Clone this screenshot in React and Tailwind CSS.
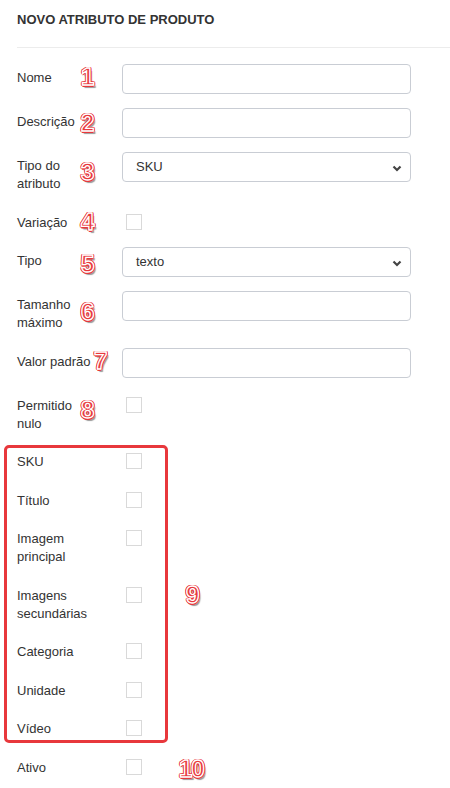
import React from "react";

const Num = ({ n, className = "" }) => (
  <span
    className={`absolute leading-none text-[24px] font-bold tracking-[-1px] text-[#e8383c] [-webkit-text-stroke:1.3px_#ffffff] [text-shadow:1.5px_0_0_#e8383c,-1.5px_0_0_#e8383c,0_1.5px_0_#e8383c,0_-1.5px_0_#e8383c,1.2px_1.2px_0_#e8383c,-1.2px_-1.2px_0_#e8383c,1.2px_-1.2px_0_#e8383c,-1.2px_1.2px_0_#e8383c,2px_2.5px_1px_#9a9a9a] pointer-events-none ${className}`}
  >
    {n}
  </span>
);

const Label = ({ children }) => (
  <div className="w-[105px] shrink-0">
    <div className="w-[78px] pt-[5px] pb-[1.5px] leading-[18px] text-[13px] text-[#333]">
      {children}
    </div>
  </div>
);

const TextField = () => (
  <input
    type="text"
    className="w-[289px] h-[30px] border border-[#c9cdd4] rounded-[4px] bg-white px-3 text-[13px] outline-none"
  />
);

const SelectField = ({ value }) => (
  <div className="relative w-[289px] h-[30px] border border-[#c9cdd4] rounded-[4px] bg-white flex items-center pl-[13px] text-[13px] text-[#333]">
    {value}
    <svg
      className="absolute right-[8px] top-[12px]"
      width="10"
      height="7"
      viewBox="0 0 10 7"
      fill="none"
    >
      <path d="M1.5 1.5l3.5 3.5 3.5-3.5" stroke="#444" strokeWidth="2.2" />
    </svg>
  </div>
);

const Check = () => (
  <div className="ml-[4px] mt-[5px] w-4 h-4 border border-[#d9d9d9] bg-white" />
);

const Row = ({ label, children, num, numClass }) => (
  <div className="relative flex items-start">
    <Label>{label}</Label>
    {children}
    {num && <Num n={num} className={numClass} />}
  </div>
);

export default function App() {
  return (
    <div className="min-h-screen bg-white font-['Liberation_Sans',Arial,sans-serif] text-[#333]">
      <div className="ml-[17px] pt-[12px] pb-[19px] border-b border-[#ececec]">
        <h1 className="text-[13px] leading-[16px] font-bold text-[#333]">
          NOVO ATRIBUTO DE PRODUTO
        </h1>
      </div>

      <div className="pl-[17px] pt-[16px] flex flex-col gap-[14px]">
        <Row label="Nome" num="1" numClass="left-[64px] top-[1px]">
          <TextField />
        </Row>
        <Row label="Descrição" num="2" numClass="left-[64px] top-[3px]">
          <TextField />
        </Row>
        <Row label="Tipo do atributo" num="3" numClass="left-[64px] top-[8px]">
          <SelectField value="SKU" />
        </Row>
        <Row label="Variação" num="4" numClass="left-[64px] top-[1px]">
          <Check />
        </Row>
        <Row label="Tipo" num="5" numClass="left-[64px] top-[5px]">
          <SelectField value="texto" />
        </Row>
        <Row label="Tamanho máximo" num="6" numClass="left-[64px] top-[9px]">
          <TextField />
        </Row>
        <Row label="Valor padrão" num="7" numClass="left-[77px] top-[1px]">
          <TextField />
        </Row>
        <Row label="Permitido nulo" num="8" numClass="left-[64px] top-[6px]">
          <Check />
        </Row>

        <div className="relative -mt-[3px] -mb-[3px] -ml-[13px] w-[164px] border-[3px] border-[#e8383c] rounded-[5px] pl-[10px] flex flex-col gap-[14px]">
          <Row label="SKU">
            <Check />
          </Row>
          <Row label="Título">
            <Check />
          </Row>
          <Row label="Imagem principal">
            <Check />
          </Row>
          <Row label="Imagens secundárias">
            <Check />
          </Row>
          <Row label="Categoria">
            <Check />
          </Row>
          <Row label="Unidade">
            <Check />
          </Row>
          <Row label="Vídeo">
            <Check />
          </Row>
          <Num n="9" className="left-[179px] top-[135px]" />
        </div>

        <Row label="Ativo" num="10" numClass="left-[162px] top-[3px]">
          <Check />
        </Row>
      </div>
    </div>
  );
}
